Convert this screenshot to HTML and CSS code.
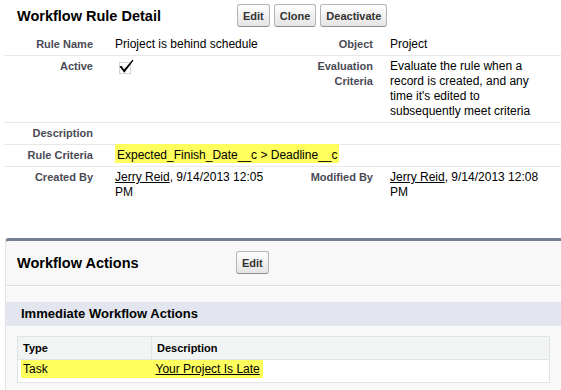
FILE: index.html
```html
<!DOCTYPE html>
<html lang="en">
<head>
  <meta charset="UTF-8">
  <title>Workflow Rule Detail</title>
  <link rel="stylesheet" href="styles.css">
</head>
<body>

  <div class="page-head">
    <h2 class="page-title">Workflow Rule Detail</h2>
    <div class="btns">
      <button class="btn">Edit</button>
      <button class="btn">Clone</button>
      <button class="btn">Deactivate</button>
    </div>
  </div>

  <div class="field-list">
    <div class="field-row">
      <div class="label">Rule Name</div>
      <div class="value">Prioject is behind schedule</div>
      <div class="label">Object</div>
      <div class="value">Project</div>
    </div>
    <div class="field-row">
      <div class="label">Active</div>
      <div class="value">
        <svg class="checkbox" width="20" height="16" viewBox="0 0 20 16">
          <rect x="4.5" y="3.5" width="11" height="11" fill="none" stroke="#aaa" stroke-dasharray="1 1"/>
          <path d="M4.5 7.5 L6.5 6.8 L9 10.5 L17.5 0.8 L18.5 1.6 L9.3 13.8 Z" fill="#000"/>
        </svg>
      </div>
      <div class="label">Evaluation Criteria</div>
      <div class="value">Evaluate the rule when a record is created, and any time it's edited to subsequently meet criteria</div>
    </div>
    <div class="field-row">
      <div class="label">Description</div>
      <div class="value wide"></div>
    </div>
    <div class="field-row">
      <div class="label">Rule Criteria</div>
      <div class="value wide"><span class="hl">Expected_Finish_Date__c &gt; Deadline__c</span></div>
    </div>
    <div class="field-row">
      <div class="label">Created By</div>
      <div class="value"><a href="#">Jerry Reid</a>, 9/14/2013 12:05<br>PM</div>
      <div class="label">Modified By</div>
      <div class="value"><a href="#">Jerry Reid</a>, 9/14/2013 12:08<br>PM</div>
    </div>
  </div>

  <div class="panel">
    <div class="panel-head">
      <h3 class="panel-title">Workflow Actions</h3>
      <button class="btn">Edit</button>
    </div>
    <div class="sub-head">Immediate Workflow Actions</div>
    <table class="actions">
      <tr>
        <th class="type-col">Type</th>
        <th>Description</th>
      </tr>
      <tr>
        <td><span class="hl-cell">Task</span></td>
        <td><span class="hl-link"><a href="#">Your Project Is Late</a></span></td>
      </tr>
    </table>
  </div>

</body>
</html>
```

FILE: styles.css
```css
* {
  box-sizing: border-box;
  font-family: Arial, 'Liberation Sans', sans-serif;
}

body {
  margin: 0;
  background: #fff;
  color: #000;
  font-size: 12px;
}

a {
  color: #000;
  text-decoration: underline;
}

/* ===== buttons ===== */
.btn {
  height: 23px;
  padding: 0 5px;
  font-size: 11px;
  font-weight: bold;
  color: #333;
  border: 1px solid #b5b5b5;
  border-bottom-color: #8f8f8f;
  border-radius: 3px;
  background: linear-gradient(#fff, #e4e4e4);
  cursor: pointer;
}

/* ===== rule detail ===== */
.page-head {
  display: flex;
  align-items: center;
  padding: 4px 0 7px 17px;
}

.page-title {
  width: 220px;
  margin: 0;
  font-size: 14.5px;
}

.btns {
  display: flex;
  gap: 4px;
}

.field-list {
  margin: 0 0 35px 4px;
}

.field-row {
  display: grid;
  grid-template-columns: 99px 178px 102px 1fr;
  border-bottom: 1px solid #e8e8e8;
}

.field-row:last-child {
  border-bottom: none;
}

.label {
  padding: 3px 10px 3px 0;
  text-align: right;
  font-size: 11px;
  font-weight: bold;
  line-height: 15px;
  color: #4a4a56;
}

.value {
  padding: 3px 10px 3px 12px;
  line-height: 15px;
}

.field-row > .value:nth-child(4) {
  padding: 3px 11px 3px 7px;
}

.wide {
  grid-column: span 3;
}

.checkbox {
  display: block;
}

.hl {
  background: #ffff5e;
  padding: 4px 2px 1px;
}

/* ===== workflow actions ===== */
.panel {
  margin-left: 5px;
  padding-bottom: 10px;
  border-top: 3px solid #767e98;
  border-left: 1px solid #e2e2e2;
  border-radius: 4px 0 0 0;
  background: #f8f8f8;
}

.panel-head {
  display: flex;
  align-items: center;
  padding: 10px 0 11px 11px;
  border-bottom: 1px solid #dbdbdb;
  box-shadow: 0 1px 0 #fff;
}

.panel-title {
  width: 219px;
  margin: 0;
  font-size: 14.5px;
}

.sub-head {
  margin-top: 16px;
  height: 24px;
  padding-left: 15px;
  line-height: 24px;
  font-size: 13px;
  font-weight: bold;
  background: #e3e6ee;
}

.actions {
  width: calc(100% - 22px);
  margin: 10px 11px 0;
  border-collapse: collapse;
  border: 1px solid #e0e3e5;
  background: #fff;
}

.actions th {
  height: 23px;
  padding: 0 5px;
  text-align: left;
  font-size: 11px;
  font-weight: bold;
  background: #f2f3f3;
  border: 1px solid #e0e3e5;
}

.actions .type-col {
  width: 134px;
}

.actions td {
  height: 23px;
  padding: 0;
  vertical-align: top;
}

.hl-cell {
  display: block;
  margin-left: 3px;
  padding: 2px;
  line-height: 14px;
  background: #ffff5e;
}

.hl-link {
  display: inline-block;
  padding: 2px 3px 2px 4px;
  line-height: 14px;
  background: #ffff5e;
}
```
